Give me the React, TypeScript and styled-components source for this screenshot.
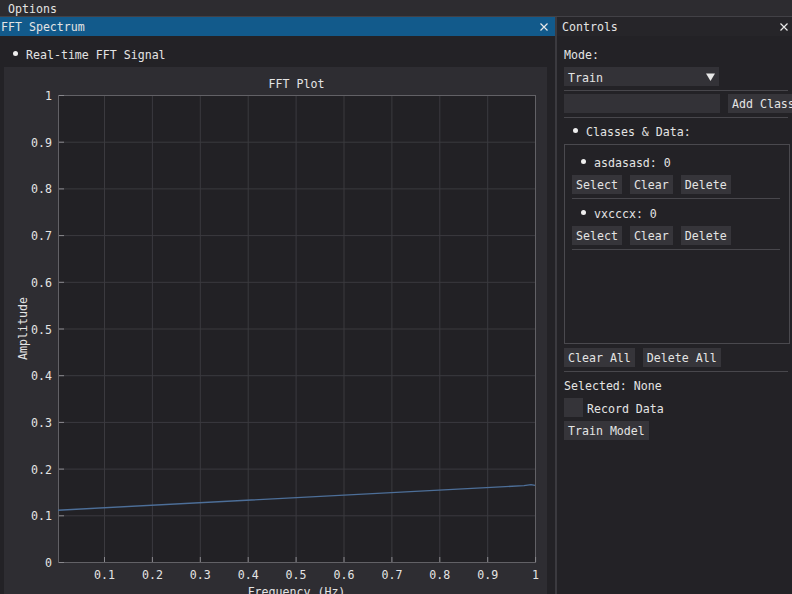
import React from 'react';
import styled, { createGlobalStyle } from 'styled-components';

const GlobalStyle = createGlobalStyle`
  html, body {
    margin: 0;
    padding: 0;
    background: #232226;
    overflow: hidden;
  }
  body {
    font-family: "DejaVu Sans Mono", "Liberation Mono", monospace;
    font-size: 11.6px;
    color: #e4e4e4;
  }
  * { box-sizing: border-box; }
`;

const Screen = styled.div`
  width: 792px;
  height: 594px;
  display: flex;
  flex-direction: column;
  overflow: hidden;
  background: #232226;
`;

const MenuBar = styled.div`
  height: 17px;
  flex: none;
  display: flex;
  align-items: center;
  padding: 1px 0 0 8px;
  line-height: 16px;
  background: #2d2c30;
  border-bottom: 1px solid #424146;
`;

const Desk = styled.div`
  flex: 1;
  display: flex;
  min-height: 0;
`;

const Window = styled.div<{ $width: number; $divider?: boolean }>`
  width: ${(p) => p.$width}px;
  flex: none;
  display: flex;
  flex-direction: column;
  background: #232226;
  border-right: ${(p) => (p.$divider ? '2px solid #3b3a3f' : 'none')};
  overflow: hidden;
`;

const TitleBar = styled.div<{ $active?: boolean; $indent: number }>`
  height: 19px;
  flex: none;
  display: flex;
  align-items: center;
  justify-content: space-between;
  padding: 0 7px 0 ${(p) => p.$indent}px;
  line-height: 19px;
  background: ${(p) => (p.$active ? '#125a8b' : '#262529')};
  & > span {
    padding-top: 2px;
  }
`;

const CloseIcon = () => (
  <svg width="8" height="8" viewBox="0 0 8 8">
    <path d="M0.5 0.5 L7.5 7.5 M7.5 0.5 L0.5 7.5" stroke="#e8e8e8" strokeWidth="1.2" />
  </svg>
);

const Body = styled.div<{ $left: number }>`
  flex: 1;
  display: flex;
  flex-direction: column;
  gap: 4px;
  padding: 8px 0 0 ${(p) => p.$left}px;
  min-height: 0;
`;

const Row = styled.div`
  height: 19px;
  flex: none;
  display: flex;
  align-items: center;
  gap: 8px;
  white-space: nowrap;
`;

const BulletRow = styled.div`
  height: 19px;
  flex: none;
  display: flex;
  align-items: center;
  white-space: nowrap;
  line-height: 19px;
  padding-top: 3px;
`;

const Dot = styled.span`
  width: 22px;
  height: 5px;
  margin-top: -3px;
  flex: none;
  display: flex;
  justify-content: center;
  &::before {
    content: '';
    width: 5px;
    height: 5px;
    border-radius: 50%;
    background: #eeeeee;
  }
`;

const Label = styled.div`
  height: 19px;
  flex: none;
  line-height: 19px;
  padding-top: 2px;
  white-space: nowrap;
`;

const Button = styled.div`
  height: 19px;
  flex: none;
  padding: 1px 4px 0;
  line-height: 19px;
  background: #36353a;
  white-space: nowrap;
  overflow: hidden;
`;

const Separator = styled.div<{ $width: number; $tight?: boolean }>`
  width: ${(p) => p.$width}px;
  height: 1px;
  flex: none;
  background: #48474c;
  margin-bottom: ${(p) => (p.$tight ? '-1px' : '0')};
`;

const Combo = styled.div`
  width: 155px;
  height: 19px;
  flex: none;
  display: flex;
  align-items: center;
  justify-content: space-between;
  padding: 0 4px;
  background: #333237;
  & > span {
    padding-top: 2px;
  }
`;

const InputBox = styled.div`
  width: 156px;
  height: 19px;
  flex: none;
  background: #333237;
`;

const Checkbox = styled.div`
  width: 19px;
  height: 19px;
  flex: none;
  background: #353439;
`;

const CheckRow = styled(Row)`
  gap: 4px;
  & > span {
    padding-top: 2px;
  }
`;

const ClassList = styled.div`
  width: 226px;
  height: 200px;
  flex: none;
  display: flex;
  flex-direction: column;
  gap: 4px;
  padding: 7px 7px 0 7px;
  border: 1px solid #4a494e;
  background: #232226;
`;

/* plot */

const PlotChild = styled.div`
  width: 543px;
  flex: 1;
  display: flex;
  flex-direction: column;
  background: #2e2d32;
  overflow: hidden;
`;

const PlotTitle = styled.div`
  height: 28px;
  flex: none;
  padding: 11px 0 0 54px;
  width: 531px;
  text-align: center;
  line-height: 13px;
`;

const PlotSvg = styled.svg`
  flex: none;
  overflow: visible;
  font-family: "DejaVu Sans Mono", "Liberation Mono", monospace;
  font-size: 11.6px;
`;

const X = (v: number) => 100 + (v - 0.1) * 479;
const Y = (v: number) => 467 - v * 467;
const ticks = [0.1, 0.2, 0.3, 0.4, 0.5, 0.6, 0.7, 0.8, 0.9];
const fmt = (v: number) => (v === 0 || v === 1 ? String(v) : v.toFixed(1));

const FftPlot = () => {
  const pts = [
    [54, 415.2],
    [520, 390.6],
    [527, 389.6],
    [531, 390.4],
  ];
  return (
    <PlotChild>
      <PlotTitle>FFT Plot</PlotTitle>
      <PlotSvg width={543} height={510}>
        <rect x={54.5} y={0.5} width={477} height={467} fill="#222125" />
        {ticks.map((t) => (
          <g key={t}>
            <line x1={X(t) + 0.5} x2={X(t) + 0.5} y1={1} y2={467} stroke="#3b3a3f" />
            <line x1={55} x2={531} y1={Y(t) + 0.5} y2={Y(t) + 0.5} stroke="#3b3a3f" />
          </g>
        ))}
        <rect x={54.5} y={0.5} width={477} height={467} fill="none" stroke="#626166" />
        {[...ticks, 1].map((t) => (
          <line key={'xt' + t} x1={X(t) + 0.5} x2={X(t) + 0.5} y1={462} y2={467} stroke="#8a898e" />
        ))}
        {[0, ...ticks, 1].map((t) => (
          <line key={'yt' + t} x1={55} x2={60} y1={Y(t) + 0.5} y2={Y(t) + 0.5} stroke="#8a898e" />
        ))}
        <polyline
          points={pts.map((p) => p.join(',')).join(' ')}
          fill="none"
          stroke="#4d6f99"
          strokeWidth={1.4}
        />
        {[0, ...ticks, 1].map((t) => (
          <text key={'yl' + t} x={48} y={Y(t) + 5} textAnchor="end" fill="#e4e4e4">
            {fmt(t)}
          </text>
        ))}
        {[...ticks, 1].map((t) => (
          <text key={'xl' + t} x={X(t) + 0.5} y={484} textAnchor="middle" fill="#e4e4e4">
            {fmt(t)}
          </text>
        ))}
        <text
          x={0}
          y={0}
          transform="translate(22.5 233.5) rotate(-90)"
          textAnchor="middle"
          fill="#e4e4e4"
        >
          Amplitude
        </text>
        <text x={292.5} y={501} textAnchor="middle" fill="#e4e4e4">
          Frequency (Hz)
        </text>
      </PlotSvg>
    </PlotChild>
  );
};

const ComboArrow = () => (
  <svg width="9" height="8" viewBox="0 0 9 8">
    <path d="M0 0.5 H9 L4.5 8 Z" fill="#e8e8e8" />
  </svg>
);

const classes = [
  { name: 'asdasasd', count: 0 },
  { name: 'vxcccx', count: 0 },
];

export default function App() {
  return (
    <Screen>
      <GlobalStyle />
      <MenuBar>Options</MenuBar>
      <Desk>
        <Window $width={557} $divider>
          <TitleBar $active $indent={1}>
            <span>FFT Spectrum</span>
            <CloseIcon />
          </TitleBar>
          <Body $left={4}>
            <BulletRow>
              <Dot />
              Real-time FFT Signal
            </BulletRow>
            <FftPlot />
          </Body>
        </Window>
        <Window $width={238}>
          <TitleBar $indent={5}>
            <span>Controls</span>
            <CloseIcon />
          </TitleBar>
          <Body $left={7}>
            <Label>Mode:</Label>
            <Combo>
              <span>Train</span>
              <ComboArrow />
            </Combo>
            <Separator $width={224} $tight />
            <Row>
              <InputBox />
              <Button>Add Class</Button>
            </Row>
            <Separator $width={224} $tight />
            <BulletRow>
              <Dot />
              Classes &amp; Data:
            </BulletRow>
            <ClassList>
              {classes.map((c) => (
                <React.Fragment key={c.name}>
                  <BulletRow>
                    <Dot />
                    {c.name}: {c.count}
                  </BulletRow>
                  <Row>
                    <Button>Select</Button>
                    <Button>Clear</Button>
                    <Button>Delete</Button>
                  </Row>
                  <Separator $width={208} />
                </React.Fragment>
              ))}
            </ClassList>
            <Row>
              <Button>Clear All</Button>
              <Button>Delete All</Button>
            </Row>
            <Separator $width={224} $tight />
            <Label>Selected: None</Label>
            <CheckRow>
              <Checkbox />
              <span>Record Data</span>
            </CheckRow>
            <Row>
              <Button>Train Model</Button>
            </Row>
          </Body>
        </Window>
      </Desk>
    </Screen>
  );
}
